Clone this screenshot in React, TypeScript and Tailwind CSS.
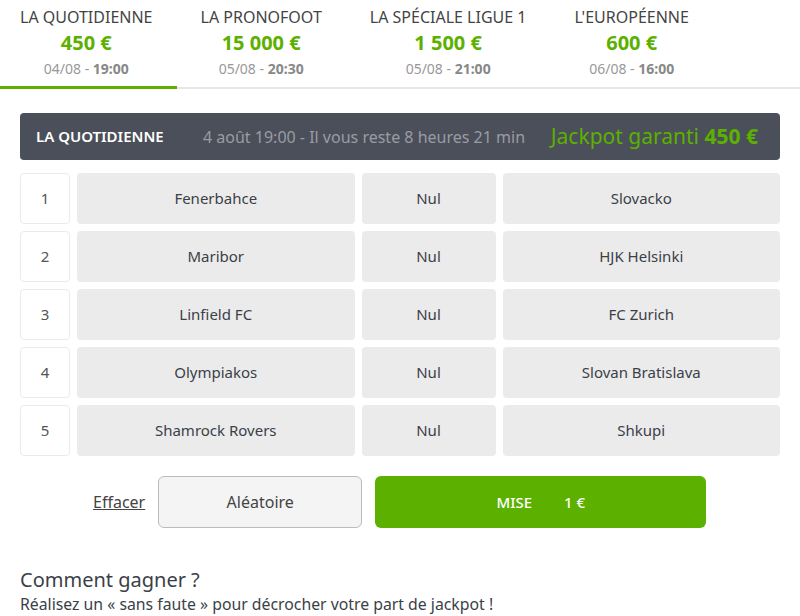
const tabs = [
  { name: "LA QUOTIDIENNE", amount: "450 €", day: "04/08", hour: "19:00", active: true },
  { name: "LA PRONOFOOT", amount: "15 000 €", day: "05/08", hour: "20:30" },
  { name: "LA SPÉCIALE LIGUE 1", amount: "1 500 €", day: "05/08", hour: "21:00" },
  { name: "L'EUROPÉENNE", amount: "600 €", day: "06/08", hour: "16:00" },
];

const matches = [
  ["Fenerbahce", "Slovacko"],
  ["Maribor", "HJK Helsinki"],
  ["Linfield FC", "FC Zurich"],
  ["Olympiakos", "Slovan Bratislava"],
  ["Shamrock Rovers", "Shkupi"],
];

const App = () => {
  return (
    <div className="w-[800px] bg-white text-[#3a3f48] font-['Noto_Sans',sans-serif]">
      <nav className="flex gap-1 border-b-2 border-[#e6e6e6]">
        {tabs.map((t) => (
          <div
            key={t.name}
            className={`flex flex-col items-center pl-5 pr-6 pt-[7px] pb-[6px] -mb-[2px] border-b-[3px] ${
              t.active ? "border-[#5cb100]" : "border-transparent"
            }`}
          >
            <span className="text-[16px] leading-5 text-[#444]">{t.name}</span>
            <span className="text-[20px] leading-[31px] font-bold text-[#5cb100]">{t.amount}</span>
            <span className="text-[14px] leading-[22px] text-[#999]">
              {t.day} - <b className="text-[#888]">{t.hour}</b>
            </span>
          </div>
        ))}
      </nav>

      <main className="px-5 pt-[24px]">
        <div className="flex items-center h-[47px] rounded bg-[#4b4f5a] pl-4 pr-[22px]">
          <span className="text-[15px] font-semibold text-white w-[167px]">LA QUOTIDIENNE</span>
          <span className="text-[16px] text-[#9a9ca3]">4 août 19:00 - Il vous reste 8 heures 21 min</span>
          <span className="ml-auto text-[21px] text-[#5cb100]">
            Jackpot garanti <b>450 €</b>
          </span>
        </div>

        <div className="flex flex-col gap-[7px] mt-[13px]">
          {matches.map(([home, away], i) => (
            <div key={home} className="flex gap-[7px] h-[51px] text-[15px]">
              <div className="w-[50px] flex items-center justify-center rounded border border-[#ebebeb] text-[#555]">
                {i + 1}
              </div>
              <div className="flex-1 flex items-center justify-center rounded bg-[#ebebeb]">{home}</div>
              <div className="w-[134px] flex items-center justify-center rounded bg-[#ebebeb]">Nul</div>
              <div className="flex-1 flex items-center justify-center rounded bg-[#ebebeb]">{away}</div>
            </div>
          ))}
        </div>

        <div className="flex items-center mt-[20px] h-[52px]">
          <a className="ml-[73px] text-[16px] underline text-[#444]">Effacer</a>
          <button className="ml-[13px] w-[204px] h-full rounded-md border border-[#bbb] bg-[#f4f4f4] text-[16px] text-[#444]">
            Aléatoire
          </button>
          <button className="ml-[13px] w-[331px] h-full rounded-md bg-[#5cb100] text-[15px] text-white font-medium">
            MISE <span className="ml-7">1 €</span>
          </button>
        </div>

        <h2 className="mt-10 text-[20px] leading-6 text-[#3a3f48]">Comment gagner ?</h2>
        <p className="text-[15.8px] leading-6 text-[#3a3f48]">
          Réalisez un « sans faute » pour décrocher votre part de jackpot !
        </p>
      </main>
    </div>
  );
};

export default App;
